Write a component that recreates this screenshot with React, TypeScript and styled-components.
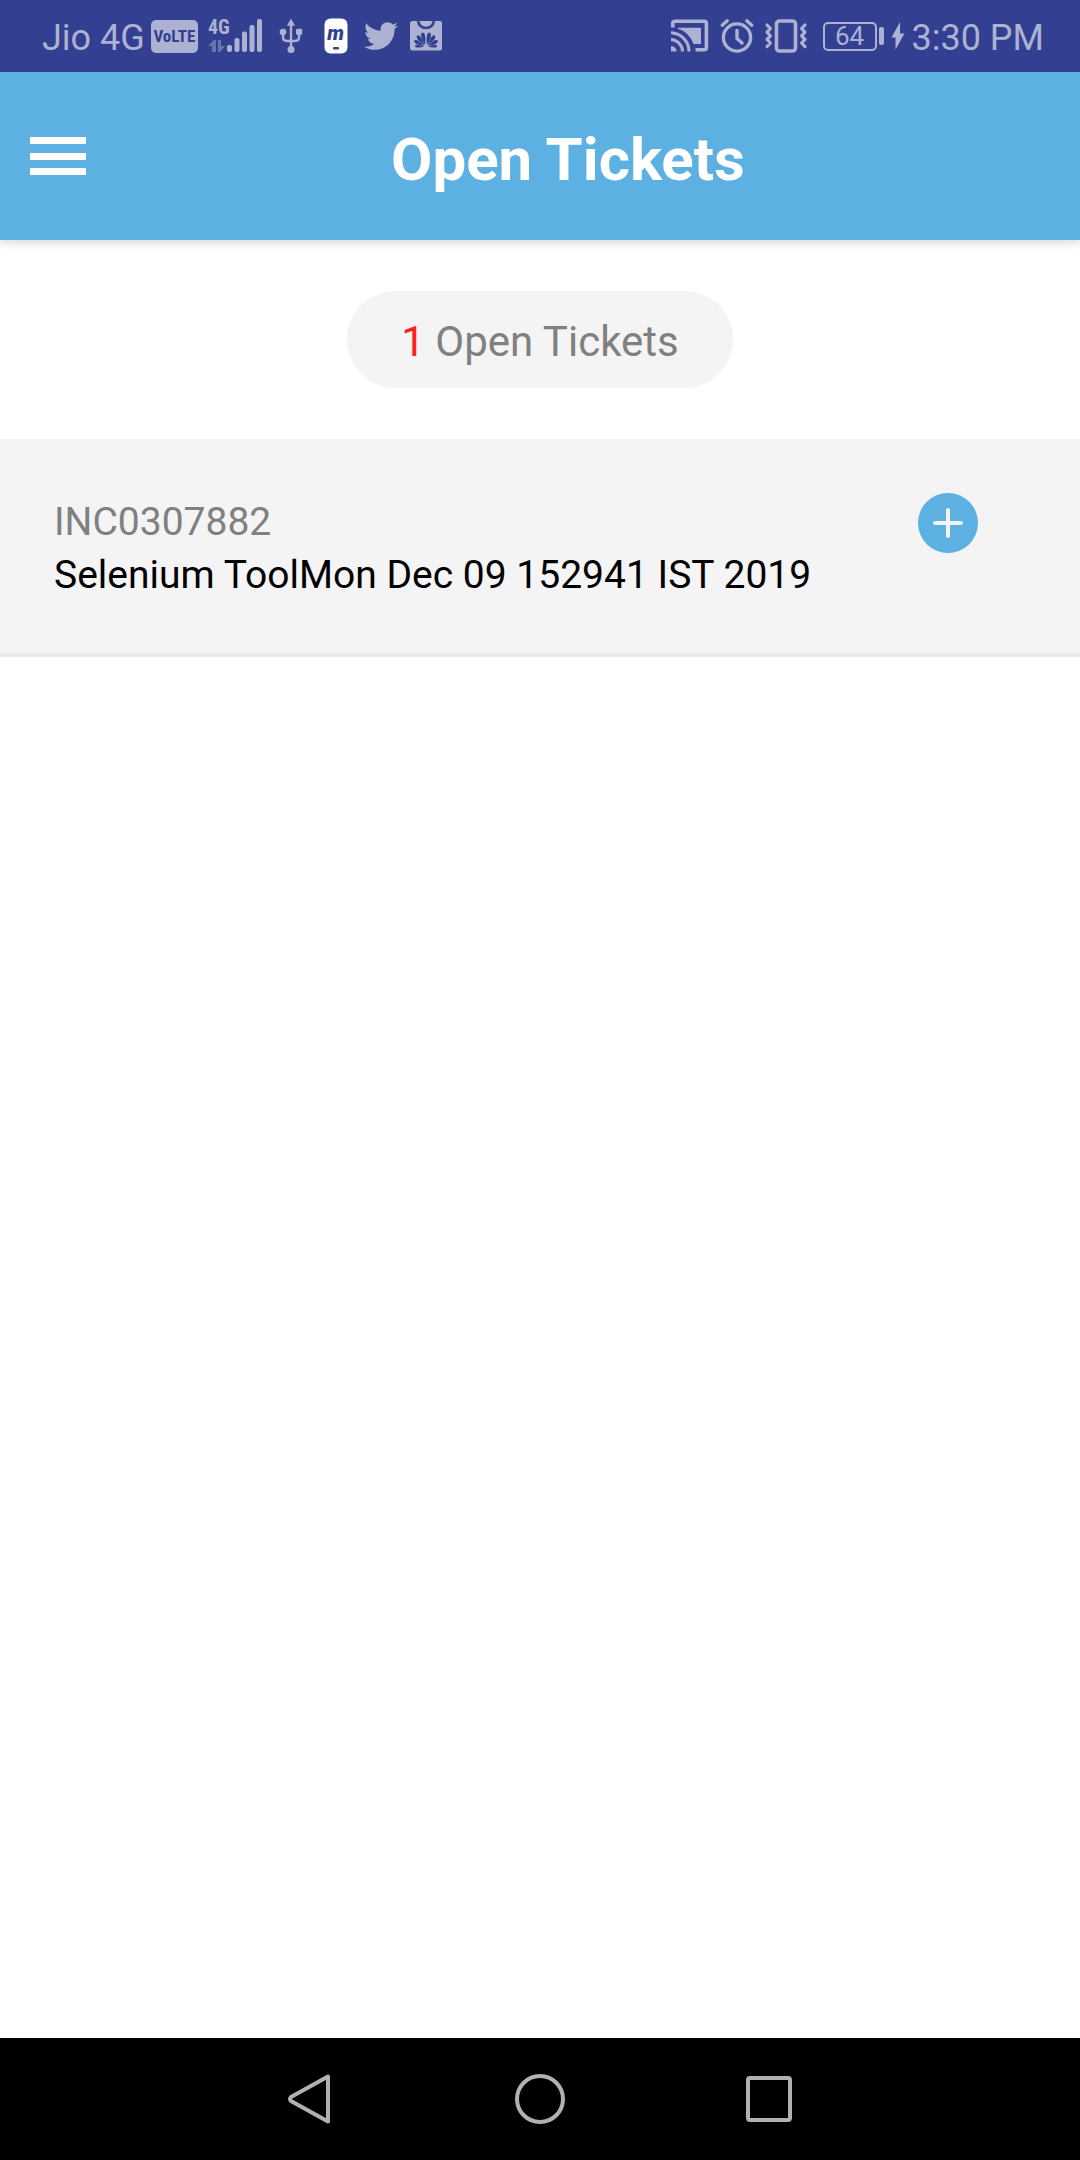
import React from "react";
import styled, { createGlobalStyle } from "styled-components";
import { FaTwitter } from "react-icons/fa";

const palette = {
  status: "#333f90",
  statusInk: "#adb2d3",
  brand: "#5cb0e2",
  surface: "#f4f4f4",
  divider: "#ebebeb",
  muted: "#808080",
  alert: "#ff1f1f",
  navInk: "#b1b1b1",
};

const GlobalStyle = createGlobalStyle`
  *, *::before, *::after { box-sizing: border-box; }
  body {
    margin: 0;
    background: #fff;
    font-family: Roboto, "Noto Sans", sans-serif;
  }
  button {
    margin: 0;
    padding: 0;
    border: 0;
    background: none;
    font: inherit;
    cursor: pointer;
  }
  svg { display: block; flex: none; overflow: visible; }
`;

const Screen = styled.div`
  display: flex;
  flex-direction: column;
  min-height: 100vh;
`;

const StatusBar = styled.div`
  display: flex;
  align-items: center;
  justify-content: space-between;
  height: 72px;
  padding: 0 36px 0 42px;
  background: ${palette.status};
  color: ${palette.statusInk};
  z-index: 2;
`;

const StatusGroup = styled.div<{ $gap: number }>`
  display: flex;
  align-items: center;
  gap: ${(p) => p.$gap}px;
`;

const StatusText = styled.span`
  padding-top: 3px;
  font-size: 36px;
  line-height: 42px;
  white-space: nowrap;
`;

const VolteBadge = styled.span`
  display: flex;
  align-items: center;
  justify-content: center;
  width: 47px;
  height: 33px;
  border-radius: 5px;
  background: ${palette.statusInk};
  color: ${palette.status};
  font: 700 17px/24px "Liberation Sans Narrow", "Roboto Condensed", "DejaVu Sans Condensed", sans-serif;
`;

const NotificationTray = styled.div`
  display: grid;
  grid-template-columns: repeat(4, 45px);
  justify-items: center;
  align-items: center;
`;

const Battery = styled.span`
  display: flex;
  align-items: center;
  gap: 2px;
  margin-left: 5px;
`;

const BatteryBody = styled.span`
  display: flex;
  align-items: center;
  justify-content: center;
  width: 54px;
  height: 29px;
  border: 2px solid ${palette.statusInk};
  border-radius: 5px;
  font-size: 26px;
  line-height: 25px;
`;

const BatteryCap = styled.span`
  width: 5px;
  height: 18px;
  border-radius: 2px;
  background: ${palette.statusInk};
`;

const Header = styled.header`
  display: flex;
  align-items: center;
  height: 168px;
  padding: 0 30px;
  background: ${palette.brand};
  box-shadow: 0 2px 10px rgba(0, 0, 0, 0.18);
  z-index: 1;
`;

const MenuButton = styled.button`
  display: flex;
  flex-direction: column;
  justify-content: space-between;
  width: 56px;
  height: 38px;
`;

const MenuLine = styled.span`
  height: 7px;
  background: #fff;
`;

const Title = styled.h1`
  flex: 1;
  margin: 0;
  padding-top: 8px;
  color: #fff;
  font-size: 60px;
  font-weight: 700;
  line-height: 70px;
  text-align: center;
`;

const Content = styled.main`
  flex: 1;
  background: #fff;
`;

const Summary = styled.div`
  display: flex;
  justify-content: center;
  padding: 51px 24px;
`;

const CountPill = styled.p`
  margin: 0;
  padding: 26px 54px 22px;
  border-radius: 49px;
  background: ${palette.surface};
  color: ${palette.muted};
  font-size: 42px;
  line-height: 49px;
`;

const Count = styled.span`
  color: ${palette.alert};
`;

const TicketList = styled.ul`
  margin: 0;
  padding: 0;
  list-style: none;
`;

const Ticket = styled.li`
  display: flex;
  align-items: flex-start;
  justify-content: space-between;
  padding: 54px 102px 51px 54px;
  border-bottom: 4px solid ${palette.divider};
  background: ${palette.surface};
`;

const TicketText = styled.div`
  padding-top: 3px;
  font-size: 39px;
  line-height: 53px;
`;

const TicketNumber = styled.div`
  color: ${palette.muted};
`;

const TicketTitle = styled.div`
  color: #000;
`;

const ExpandButton = styled.button`
  width: 60px;
  height: 60px;
  border-radius: 50%;
  background: ${palette.brand};
`;

const SystemNav = styled.nav`
  display: flex;
  align-items: center;
  justify-content: center;
  gap: 168px;
  height: 122px;
  background: #000;
`;

const NavButton = styled.button`
  width: 60px;
  height: 60px;
`;

const SignalIcon = () => (
  <svg width="55" height="36" viewBox="208 18 55 36" fill="currentColor" aria-label="4G signal">
    <text x="208" y="34" fontSize="20" fontWeight="700" fontFamily='"Liberation Sans Narrow", "Roboto Condensed", sans-serif'>4G</text>
    <g opacity="0.45">
      <path d="M208 46l6-6h2v12h-4v-6z" />
      <path d="M218 40h3v6h4l-5 6h-2z" />
    </g>
    <rect x="227" y="45" width="5" height="7" rx="2" />
    <rect x="234.5" y="38" width="5" height="14" rx="2" />
    <rect x="242" y="31.5" width="5" height="20.5" rx="2" />
    <rect x="249.5" y="25" width="5" height="27" rx="2" />
    <rect x="257" y="19" width="5" height="33" rx="2" />
  </svg>
);

const UsbIcon = () => (
  <svg width="24" height="36" viewBox="0 0 24 36" fill="currentColor" aria-label="USB connected">
    <path d="M12 .8l4.2 7H7.8z" />
    <circle cx="12" cy="31.5" r="3.5" />
    <circle cx="4" cy="14" r="3.3" />
    <rect x="17" y="10.8" width="6.2" height="6.2" rx="1.4" />
    <path d="M12 6v24M4 14v5q0 4 4 4h8q4 0 4-4v-5" fill="none" stroke="currentColor" strokeWidth="2.4" />
  </svg>
);

const PhoneAppIcon = () => (
  <svg width="24" height="36" viewBox="0 0 24 36" aria-label="Mobile app notification">
    <rect x="0.5" y="0.5" width="23" height="35" rx="6" fill="#fff" />
    <text x="11.5" y="22" textAnchor="middle" fontFamily="Roboto, sans-serif" fontSize="20" fontStyle="italic" fontWeight="900" fill={palette.status}>m</text>
    <rect x="9" y="29" width="6" height="2.4" rx="1" fill={palette.status} />
  </svg>
);

const petals = [
  { angle: 12, scale: 1 },
  { angle: 36, scale: 0.96 },
  { angle: 60, scale: 0.88 },
  { angle: 84, scale: 0.72 },
];

const StoreIcon = () => (
  <svg width="32" height="30" viewBox="0 0 32 30" aria-label="App store">
    <rect width="32" height="29.500" rx="2.500" fill="currentColor" />
    <path d="M8 0q1.500 7 8 7t8-7" fill="none" stroke={palette.status} strokeWidth="2.600" />
    <g fill={palette.status}>
      {petals.flatMap(({ angle, scale }) =>
        [-1, 1].map((side) => (
          <path
            key={angle * side}
            d="M0-2C-1.200-6-2-9-1.900-12C-1.600-15.600 1.600-15.600 1.900-12C2-9 1.200-6 0-2z"
            transform={`translate(${16 + side * 0.5} 26) rotate(${angle * side}) scale(${scale})`}
          />
        ))
      )}
    </g>
  </svg>
);

const CastIcon = () => (
  <svg width="38" height="34" viewBox="0 0 38 34" fill="none" stroke="currentColor" strokeWidth="3.6" aria-label="Casting">
    <path d="M1.800 8.500V4.500q0-2.300 2.300-2.300h29q2.300 0 2.300 2.300v24q0 2.300-2.300 2.300H24.500" />
    <path d="M7 8.700h23v16.300h-7.500Q18 13 7 9.800z" fill="currentColor" stroke="none" />
    <path d="M0 27a5.500 5.500 0 0 1 5.500 5.500H0z" fill="currentColor" stroke="none" />
    <path d="M0 20.500a12 12 0 0 1 11.500 12M0 13.800a18.500 18.500 0 0 1 18 18.700" strokeWidth="3" />
  </svg>
);

const AlarmIcon = () => (
  <svg width="34" height="34" viewBox="0 0 34 34" fill="none" stroke="currentColor" strokeWidth="3.4" strokeLinecap="round" strokeLinejoin="round" aria-label="Alarm set">
    <circle cx="17" cy="18.500" r="13.600" />
    <path d="M17 11.500v8l5 4.500M2.200 6.200l5-4.400M31.800 6.200l-5-4.400" />
  </svg>
);

const VibrateIcon = () => (
  <svg width="42" height="34" viewBox="0 0 42 34" fill="none" stroke="currentColor" strokeWidth="3.6" strokeLinecap="round" strokeLinejoin="round" aria-label="Vibrate">
    <rect x="11.500" y="2" width="19" height="30" rx="3" />
    <path d="M2 6l3.400 3.600L2 13.200l3.400 3.600L2 20.400 5.400 24 2 27.600M40 6l-3.400 3.600 3.400 3.600-3.400 3.600 3.400 3.600-3.400 3.600 3.400 3.600" strokeWidth="3.200" />
  </svg>
);

const BoltIcon = () => (
  <svg width="14" height="28" viewBox="0 0 14 28" fill="currentColor" aria-label="Charging">
    <path d="M9 0v11.500h4.500L4.500 27.500V15.500H.5z" />
  </svg>
);

const tickets = [
  { id: "INC0307882", title: "Selenium ToolMon Dec 09 152941 IST 2019" },
];

export default function App() {
  return (
    <Screen>
      <GlobalStyle />
      <StatusBar>
        <StatusGroup $gap={6}>
          <StatusText>Jio 4G</StatusText>
          <StatusGroup $gap={10}>
            <VolteBadge>VoLTE</VolteBadge>
            <SignalIcon />
          </StatusGroup>
          <NotificationTray>
            <UsbIcon />
            <PhoneAppIcon />
            <FaTwitter size={34} aria-label="Twitter" />
            <StoreIcon />
          </NotificationTray>
        </StatusGroup>
        <StatusGroup $gap={7}>
          <StatusGroup $gap={11}>
            <CastIcon />
            <AlarmIcon />
            <VibrateIcon />
            <Battery>
              <BatteryBody>64</BatteryBody>
              <BatteryCap />
            </Battery>
          </StatusGroup>
          <BoltIcon />
          <StatusText>3:30 PM</StatusText>
        </StatusGroup>
      </StatusBar>

      <Header>
        <MenuButton type="button" aria-label="Open menu">
          <MenuLine />
          <MenuLine />
          <MenuLine />
        </MenuButton>
        <Title>Open Tickets</Title>
      </Header>

      <Content>
        <Summary>
          <CountPill>
            <Count>{tickets.length}</Count> Open Tickets
          </CountPill>
        </Summary>
        <TicketList>
          {tickets.map((ticket) => (
            <Ticket key={ticket.id}>
              <TicketText>
                <TicketNumber>{ticket.id}</TicketNumber>
                <TicketTitle>{ticket.title}</TicketTitle>
              </TicketText>
              <ExpandButton type="button" aria-label={`Expand ${ticket.id}`}>
                <svg width="60" height="60" viewBox="0 0 60 60" stroke={palette.surface} strokeWidth="4" strokeLinecap="round">
                  <path d="M30 17v26M17 30h26" />
                </svg>
              </ExpandButton>
            </Ticket>
          ))}
        </TicketList>
      </Content>

      <SystemNav aria-label="System navigation">
        <NavButton type="button" aria-label="Back">
          <svg width="60" height="60" viewBox="0 0 60 60" fill="none" stroke={palette.navInk} strokeWidth="4" strokeLinejoin="round">
            <path d="M46 7.500v45L9 32q-2-2 0-4z" />
          </svg>
        </NavButton>
        <NavButton type="button" aria-label="Home">
          <svg width="60" height="60" viewBox="0 0 60 60" fill="none" stroke={palette.navInk} strokeWidth="4">
            <circle cx="30" cy="30" r="23" />
          </svg>
        </NavButton>
        <NavButton type="button" aria-label="Recent apps">
          <svg width="60" height="60" viewBox="0 0 60 60" fill="none" stroke={palette.navInk} strokeWidth="4">
            <rect x="10" y="9" width="42" height="42" rx="2" />
          </svg>
        </NavButton>
      </SystemNav>
    </Screen>
  );
}
